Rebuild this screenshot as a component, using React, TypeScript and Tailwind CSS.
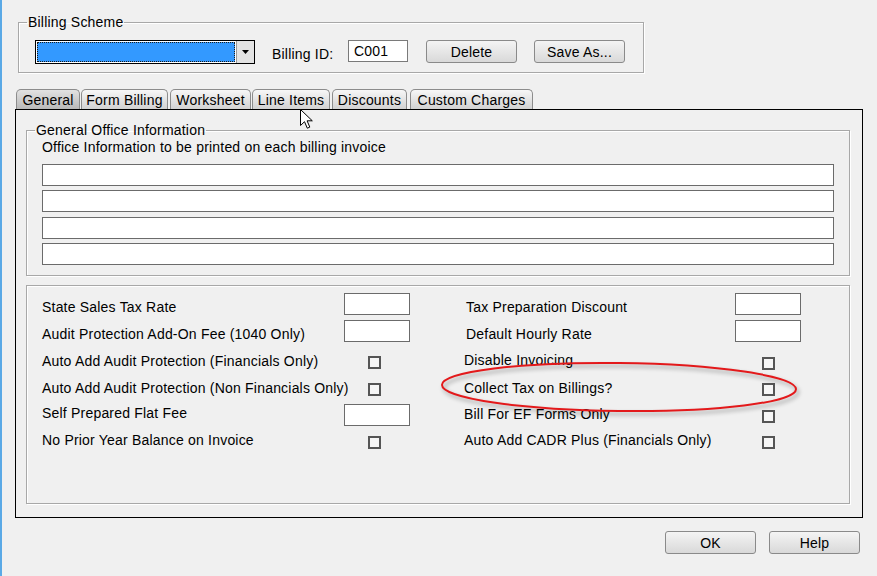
import type { ReactNode } from "react";

// ── Small win32-style controls ──────────────────────────────────────────────

function PushButton({ label, className = "" }: { label: string; className?: string }) {
  return (
    <button
      type="button"
      className={`flex h-[23px] w-[91px] items-center justify-center rounded-[3px] border border-[#8a8a8a] bg-linear-to-b from-[#f4f4f4] to-[#d9d9d9] text-black ${className}`}
    >
      {label}
    </button>
  );
}

function TextBox({ className = "" }: { className?: string }) {
  return <div className={`h-[22px] w-[66px] border border-[#6b6b6b] bg-white ${className}`} />;
}

function CheckBox({ className = "" }: { className?: string }) {
  return <div className={`h-[13px] w-[13px] border-2 border-[#555] bg-[#f6f6f6] ${className}`} />;
}

function Cell({ w, mt, children }: { w: string; mt: string; children?: ReactNode }) {
  return <div className={`${w} ${mt} shrink-0 whitespace-nowrap`}>{children}</div>;
}

// ── Tabs ────────────────────────────────────────────────────────────────────

const tabs = [
  { label: "General", w: "w-[64px]", ml: "ml-0", active: true },
  { label: "Form Billing", w: "w-[87px]", ml: "ml-[1px]", active: false },
  { label: "Worksheet", w: "w-[81px]", ml: "ml-[2px]", active: false },
  { label: "Line Items", w: "w-[78px]", ml: "ml-[1px]", active: false },
  { label: "Discounts", w: "w-[75px]", ml: "ml-[2px]", active: false },
  { label: "Custom Charges", w: "w-[123px]", ml: "ml-[3px]", active: false },
];

export default function App() {
  return (
    <div className="relative h-[576px] w-[877px] overflow-hidden border-l-2 border-[#5aa9e6] bg-[#f0f0f0] font-['Liberation_Sans',Arial,sans-serif] text-[14px] leading-[16px] tracking-[0.2px] text-black">
      {/* Billing scheme group */}
      <fieldset className="ml-[16px] mt-[14px] w-[626px] border border-[#a8a8a8] pb-[8px] pl-[16px] pt-[10px] shadow-[1px_1px_0_#fff,inset_1px_1px_0_#fff]">
        <legend className="-ml-[8px] px-[1px]">Billing Scheme</legend>
        <div className="flex items-start">
          <div className="flex h-[24px] w-[220px] border border-black bg-white">
            <div className="m-[1px] flex-1 border border-dotted border-[#1b1b1b] bg-[#3399ff]" />
            <div className="flex w-[18px] items-center justify-center border-l border-[#9a9a9a] bg-[#e3e3e3]">
              <svg width="7" height="4" viewBox="0 0 7 4">
                <path d="M0 0h7L3.5 4z" fill="#000" />
              </svg>
            </div>
          </div>
          <span className="ml-[17px] mt-[6px] w-[76px]">Billing ID:</span>
          <div className="h-[22px] w-[60px] border border-[#7a7a7a] bg-white pl-[5px] pt-[2px]">C001</div>
          <PushButton label="Delete" className="ml-[18px]" />
          <PushButton label="Save As..." className="ml-[17px]" />
        </div>
      </fieldset>

      {/* Tab strip */}
      <div className="ml-[14px] mt-[16px] flex">
        {tabs.map((t) => (
          <div
            key={t.label}
            className={`${t.w} ${t.ml} flex h-[20px] items-center justify-center rounded-t-[5px] border border-b-0 border-[#8c8c8c] bg-linear-to-b ${
              t.active ? "from-[#e2e2e2] to-[#b9b9b9]" : "from-[#f7f7f7] to-[#d2d2d2]"
            }`}
          >
            {t.label}
          </div>
        ))}
      </div>

      {/* Tab page */}
      <div className="ml-[13px] h-[409px] w-[848px] border border-black pl-[10px] pt-[12px]">
        <fieldset className="w-[824px] border border-[#a8a8a8] pb-[10px] pl-[15px] shadow-[1px_1px_0_#fff,inset_1px_1px_0_#fff]">
          <legend className="-ml-[7px] px-[1px]">General Office Information</legend>
          <p className="mt-[1px]">Office Information to be printed on each billing invoice</p>
          <div className="mt-[9px] h-[22px] w-[792px] border border-[#6b6b6b] bg-white" />
          <div className="mt-[4px] h-[22px] w-[792px] border border-[#6b6b6b] bg-white" />
          <div className="mt-[5px] h-[22px] w-[792px] border border-[#6b6b6b] bg-white" />
          <div className="mt-[4px] h-[22px] w-[792px] border border-[#6b6b6b] bg-white" />
        </fieldset>

        <div className="mt-[9px] h-[219px] w-[824px] border border-[#a8a8a8] pl-[15px] pt-[7px] shadow-[1px_1px_0_#fff,inset_1px_1px_0_#fff]">
          <div className="flex items-start">
            <Cell w="w-[302px]" mt="mt-[6px]">State Sales Tax Rate</Cell>
            <Cell w="w-[66px]" mt="mt-0"><TextBox /></Cell>
            <Cell w="w-[271px] ml-[54px] pl-[2px]" mt="mt-[6px]">Tax Preparation Discount</Cell>
            <Cell w="w-[66px]" mt="mt-0"><TextBox /></Cell>
          </div>
          <div className="mt-[5px] flex items-start">
            <Cell w="w-[302px]" mt="mt-[6px]">Audit Protection Add-On Fee (1040 Only)</Cell>
            <Cell w="w-[66px]" mt="mt-0"><TextBox /></Cell>
            <Cell w="w-[271px] ml-[54px] pl-[2px]" mt="mt-[6px]">Default Hourly Rate</Cell>
            <Cell w="w-[66px]" mt="mt-0"><TextBox /></Cell>
          </div>
          <div className="mt-[9px] flex items-start">
            <Cell w="w-[302px]" mt="mt-[2px]">Auto Add Audit Protection (Financials Only)</Cell>
            <Cell w="w-[66px]" mt="mt-[5px]"><CheckBox className="ml-[24px]" /></Cell>
            <Cell w="w-[271px] ml-[54px]" mt="mt-[1px]">Disable Invoicing</Cell>
            <Cell w="w-[66px]" mt="mt-[6px]"><CheckBox className="ml-[27px]" /></Cell>
          </div>
          <div className="mt-[8px] flex items-start">
            <Cell w="w-[302px]" mt="mt-[2px]">Auto Add Audit Protection (Non Financials Only)</Cell>
            <Cell w="w-[66px]" mt="mt-[5px]"><CheckBox className="ml-[24px]" /></Cell>
            <Cell w="w-[271px] ml-[54px]" mt="mt-[2px]">Collect Tax on Billings?</Cell>
            <Cell w="w-[66px]" mt="mt-[5px]"><CheckBox className="ml-[27px]" /></Cell>
          </div>
          <div className="mt-[7px] flex items-start">
            <Cell w="w-[302px]" mt="mt-[2px]">Self Prepared Flat Fee</Cell>
            <Cell w="w-[66px]" mt="mt-[1px]"><TextBox /></Cell>
            <Cell w="w-[271px] ml-[54px]" mt="mt-[3px]">Bill For EF Forms Only</Cell>
            <Cell w="w-[66px]" mt="mt-[7px]"><CheckBox className="ml-[27px]" /></Cell>
          </div>
          <div className="mt-[4px] flex items-start">
            <Cell w="w-[302px]" mt="mt-[2px]">No Prior Year Balance on Invoice</Cell>
            <Cell w="w-[66px]" mt="mt-[6px]"><CheckBox className="ml-[24px]" /></Cell>
            <Cell w="w-[271px] ml-[54px]" mt="mt-[2px]">Auto Add CADR Plus (Financials Only)</Cell>
            <Cell w="w-[66px]" mt="mt-[6px]"><CheckBox className="ml-[27px]" /></Cell>
          </div>
        </div>
      </div>

      {/* Dialog buttons */}
      <div className="mr-[17px] mt-[13px] flex justify-end gap-[13px]">
        <PushButton label="OK" className="w-[90px]" />
        <PushButton label="Help" className="w-[90px]" />
      </div>

      {/* Red annotation ring */}
      <svg
        className="pointer-events-none absolute left-[430px] top-[355px] drop-shadow-[2px_3px_2px_rgba(0,0,0,0.35)]"
        width="380"
        height="70"
        viewBox="0 0 380 70"
      >
        <ellipse cx="187" cy="32" rx="177" ry="24" transform="rotate(0.7 187 32)" fill="none" stroke="#e3191b" strokeWidth="2" />
      </svg>

      {/* Mouse pointer */}
      <svg className="pointer-events-none absolute left-[298px] top-[109px]" width="13" height="20" viewBox="0 0 13 20">
        <path d="M0.5 0.5V16.5L4.5 12.7L7.3 19.2L9.8 18.1L7.1 11.8H12.3Z" fill="#fff" stroke="#000" strokeWidth="1" strokeLinejoin="round" />
      </svg>
    </div>
  );
}
